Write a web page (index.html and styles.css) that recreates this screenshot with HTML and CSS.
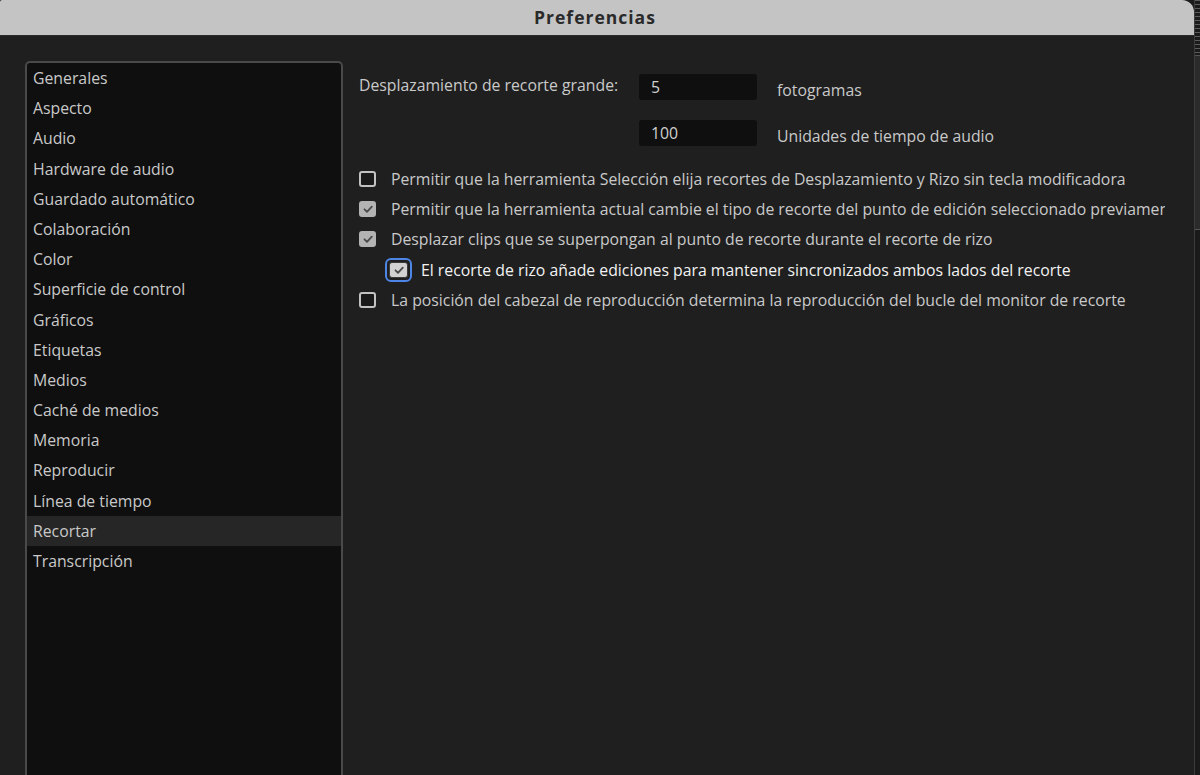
FILE: index.html
```html
<!DOCTYPE html>
<html lang="es">
<head>
<meta charset="utf-8">
<title>Preferencias</title>
<link rel="stylesheet" href="styles.css">
</head>
<body>
<div class="desktop">
  <div class="window">
    <div class="titlebar">Preferencias</div>
    <div class="content">
      <ul class="sidebar">
        <li>Generales</li>
        <li>Aspecto</li>
        <li>Audio</li>
        <li>Hardware de audio</li>
        <li>Guardado automático</li>
        <li>Colaboración</li>
        <li>Color</li>
        <li>Superficie de control</li>
        <li>Gráficos</li>
        <li>Etiquetas</li>
        <li>Medios</li>
        <li>Caché de medios</li>
        <li>Memoria</li>
        <li>Reproducir</li>
        <li>Línea de tiempo</li>
        <li class="selected">Recortar</li>
        <li>Transcripción</li>
      </ul>
      <div class="panel">
        <div class="fields">
          <div class="field-label">Desplazamiento de recorte grande:</div>
          <div class="input">5</div>
          <div class="unit">fotogramas</div>
          <div class="field-label"></div>
          <div class="input">100</div>
          <div class="unit">Unidades de tiempo de audio</div>
        </div>
        <div class="checks">
          <div class="check">
            <span class="box"></span>
            <span class="label">Permitir que la herramienta Selección elija recortes de Desplazamiento y Rizo sin tecla modificadora</span>
          </div>
          <div class="check">
            <span class="box checked"><svg viewBox="0 0 16 16"><path d="M4.5 8.3 L7 10.8 L11.8 5.6" /></svg></span>
            <span class="label">Permitir que la herramienta actual cambie el tipo de recorte del punto de edición seleccionado previamente</span>
          </div>
          <div class="check">
            <span class="box checked"><svg viewBox="0 0 16 16"><path d="M4.5 8.3 L7 10.8 L11.8 5.6" /></svg></span>
            <span class="label">Desplazar clips que se superpongan al punto de recorte durante el recorte de rizo</span>
          </div>
          <div class="check indent">
            <span class="focus-ring"><span class="box checked focused"><svg viewBox="0 0 16 16"><path d="M4.5 8.3 L7 10.8 L11.8 5.6" /></svg></span></span>
            <span class="label bright">El recorte de rizo añade ediciones para mantener sincronizados ambos lados del recorte</span>
          </div>
          <div class="check">
            <span class="box"></span>
            <span class="label">La posición del cabezal de reproducción determina la reproducción del bucle del monitor de recorte</span>
          </div>
        </div>
      </div>
    </div>
  </div>
  <div class="behind">
    <div class="b-top"></div>
    <div class="b-mid"></div>
    <div class="b-low"></div>
  </div>
</div>
</body>
</html>
```

FILE: styles.css
```css
* { box-sizing: border-box; }
html, body {
  margin: 0;
  padding: 0;
  background: #1b1b1b;
  font-family: "Open Sans", "Noto Sans", sans-serif;
  overflow: hidden;
}
.desktop {
  display: flex;
  width: 1200px;
  height: 775px;
}
.window {
  flex: none;
  width: 1194px;
  height: 775px;
  background: #1f1f1f;
  border-radius: 2px 12px 0 0;
  overflow: hidden;
  display: flex;
  flex-direction: column;
}
.titlebar {
  flex: none;
  height: 36px;
  background: #c4c4c4;
  border-bottom: 1px solid #2a2a2a;
  color: #2a2a2a;
  font-weight: 700;
  font-size: 17.5px;
  letter-spacing: 1px;
  display: flex;
  align-items: center;
  justify-content: center;
  padding: 0 4px 2px 0;
}
.content {
  flex: 1;
  display: flex;
  padding: 25px 0 0 25px;
  min-height: 0;
}
.sidebar {
  list-style: none;
  margin: 0;
  padding: 0;
  flex: none;
  width: 318px;
  height: 760px;
  background: #0f0f0f;
  border: 2px solid #4a4a4a;
  border-radius: 5px;
}
.sidebar li {
  height: 30.2px;
  line-height: 30px;
  padding-left: 6px;
  font-size: 15.8px;
  font-weight: 500;
  color: #c9c9c9;
  white-space: nowrap;
}
.sidebar li.selected {
  background: #262626;
}
.panel {
  flex: none;
  width: 822px;
  overflow: hidden;
  padding: 13px 0 0 16px;
  white-space: nowrap;
  color: #c9c9c9;
  font-size: 15.8px;
  font-weight: 500;
}
.fields {
  display: grid;
  grid-template-columns: 260px 118px auto;
  column-gap: 20px;
  row-gap: 19px;
}
.field-label {
  line-height: 22px;
}
.input {
  height: 26px;
  background: #0f0f0f;
  border-radius: 3px;
  padding-left: 12px;
  line-height: 27px;
  color: #cfcfcf;
}
.unit {
  padding-top: 5px;
  line-height: 22px;
}
.checks {
  margin-top: 17px;
  display: flex;
  flex-direction: column;
}
.check {
  height: 30.2px;
  display: flex;
  align-items: center;
  gap: 15px;
}
.check.indent {
  padding-left: 26px;
  gap: 9px;
}
.box {
  flex: none;
  width: 17px;
  height: 16px;
  border: 2px solid #c2c2c2;
  border-radius: 3px;
  background: #1a1a1a;
  display: flex;
  align-items: center;
  justify-content: center;
}
.box.checked {
  background: #b3b3b3;
  border-color: #b3b3b3;
}
.box svg {
  width: 16px;
  height: 16px;
  flex: none;
}
.box svg path {
  fill: none;
  stroke: #4a4a4a;
  stroke-width: 1.8;
  stroke-linecap: round;
  stroke-linejoin: round;
}
.focus-ring {
  flex: none;
  width: 27px;
  height: 24px;
  border: 2px solid #4d86e6;
  border-radius: 6px;
  display: flex;
  align-items: center;
  justify-content: center;
  background: #1f1f1f;
}
.box.focused {
  width: 19px;
  height: 16px;
  background: #d2d2d2;
  border: 1.5px solid #3a3a3a;
  border-radius: 3px;
}
.label.bright {
  color: #f2f2f2;
}
.behind {
  flex: none;
  width: 6px;
  height: 775px;
  background: #161616;
  border-left: 1px solid #3c3c3c;
  display: flex;
  flex-direction: column;
}
.b-top {
  height: 55px;
  background: repeating-linear-gradient(#8a8a8a 0 1px, #1e1e1e 1px 4px);
  opacity: 0.6;
}
.b-mid {
  height: 175px;
  background: #2b2b2b;
  border-top: 1px solid #555;
  border-bottom: 1px solid #555;
}
.b-low {
  flex: 1;
  background: #1a1a1a;
}
```
